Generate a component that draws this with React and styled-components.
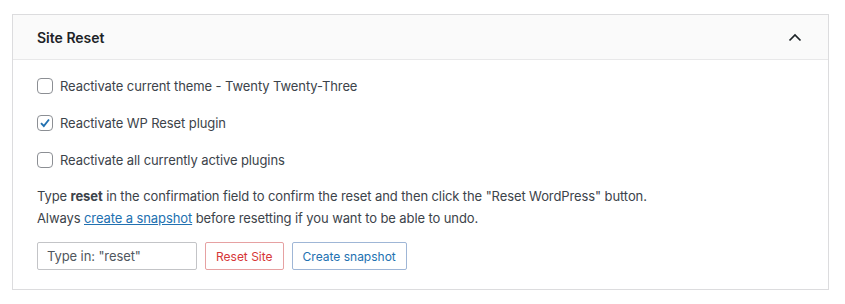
import React, { useState } from 'react';
import styled, { createGlobalStyle } from 'styled-components';

const GlobalStyle = createGlobalStyle`
  body {
    margin: 0;
    background: #ffffff;
    font-family: "Inter", "Liberation Sans", sans-serif;
    color: #3c434a;
  }
`;

const Page = styled.div`
  padding: 14px 16px 0 12px;
`;

const Card = styled.div`
  width: 817px;
  box-sizing: border-box;
  border: 1px solid #dcdcde;
  background: #fff;
`;

const Header = styled.div`
  display: flex;
  align-items: center;
  justify-content: space-between;
  height: 44px;
  padding: 0 21px 0 24px;
  background: #fafafa;
  border-bottom: 1px solid #e8e8e9;
`;

const Title = styled.h2`
  margin: 0;
  font-size: 14px;
  font-weight: 600;
  color: #1d2327;
`;

const Toggle = styled.button`
  display: flex;
  align-items: center;
  justify-content: center;
  width: 24px;
  height: 24px;
  padding: 0;
  border: 0;
  background: none;
  cursor: pointer;
`;

const Body = styled.div`
  padding: 7px 24px 19px;
  letter-spacing: -0.1px;
`;

const OptionRow = styled.label`
  display: flex;
  align-items: center;
  gap: 7px;
  height: 37px;
  font-size: 13px;
  color: #3c434a;
`;

const Box = styled.span`
  display: flex;
  align-items: center;
  justify-content: center;
  width: 16px;
  height: 16px;
  box-sizing: border-box;
  border: 1px solid #8c8f94;
  border-radius: 4px;
  background: #fff;
  flex-shrink: 0;
`;

const Note = styled.p`
  margin: 0;
  font-size: 13px;
  line-height: 22px;
  color: #3c434a;
  &:first-of-type {
    margin-top: 7px;
  }
`;

const Link = styled.a`
  color: #2271b1;
  text-decoration: underline;
`;

const Actions = styled.div`
  display: flex;
  align-items: center;
  gap: 8px;
  margin-top: 13px;
`;

const Input = styled.input`
  width: 160px;
  height: 28px;
  box-sizing: border-box;
  padding: 0 9px;
  border: 1px solid #c3c4c7;
  border-radius: 2px;
  font-family: inherit;
  font-size: 13px;
  letter-spacing: -0.1px;
  color: #3c434a;
  &::placeholder {
    color: #50575e;
  }
`;

const Button = styled.button`
  height: 28px;
  padding: 0 10px;
  box-sizing: border-box;
  border: 1px solid ${p => (p.danger ? '#e6a1a2' : '#9fb6d6')};
  border-radius: 2px;
  background: #fff;
  color: ${p => (p.danger ? '#d63638' : '#2271b1')};
  font-family: inherit;
  font-size: 12px;
  cursor: pointer;
`;

const options = [
  { label: 'Reactivate current theme - Twenty Twenty-Three', checked: false },
  { label: 'Reactivate WP Reset plugin', checked: true },
  { label: 'Reactivate all currently active plugins', checked: false },
];

const App = () => {
  const [checks, setChecks] = useState(options.map(o => o.checked));
  const [value, setValue] = useState('');

  return (
    <>
      <GlobalStyle />
      <Page>
        <Card>
          <Header>
            <Title>Site Reset</Title>
            <Toggle aria-label="Collapse">
              <svg width="14" height="9" viewBox="0 0 14 9" fill="none">
                <path d="M1.5 7.5 L7 2 L12.5 7.5" stroke="#1d2327" strokeWidth="1.7" />
              </svg>
            </Toggle>
          </Header>
          <Body>
            {options.map((o, i) => (
              <OptionRow key={i} onClick={() => setChecks(checks.map((c, j) => (j === i ? !c : c)))}>
                <Box>
                  {checks[i] && (
                    <svg width="14" height="14" viewBox="0 0 14 14" fill="none">
                      <path d="M3 7.2 L5.8 10 L11 3.5" stroke="#2271b1" strokeWidth="1.9" />
                    </svg>
                  )}
                </Box>
                {o.label}
              </OptionRow>
            ))}
            <Note>
              Type <strong>reset</strong> in the confirmation field to confirm the reset and then click the "Reset WordPress" button.
            </Note>
            <Note>
              Always <Link href="#">create a snapshot</Link> before resetting if you want to be able to undo.
            </Note>
            <Actions>
              <Input placeholder='Type in: "reset"' value={value} onChange={e => setValue(e.target.value)} />
              <Button danger>Reset Site</Button>
              <Button>Create snapshot</Button>
            </Actions>
          </Body>
        </Card>
      </Page>
    </>
  );
};

export default App;
